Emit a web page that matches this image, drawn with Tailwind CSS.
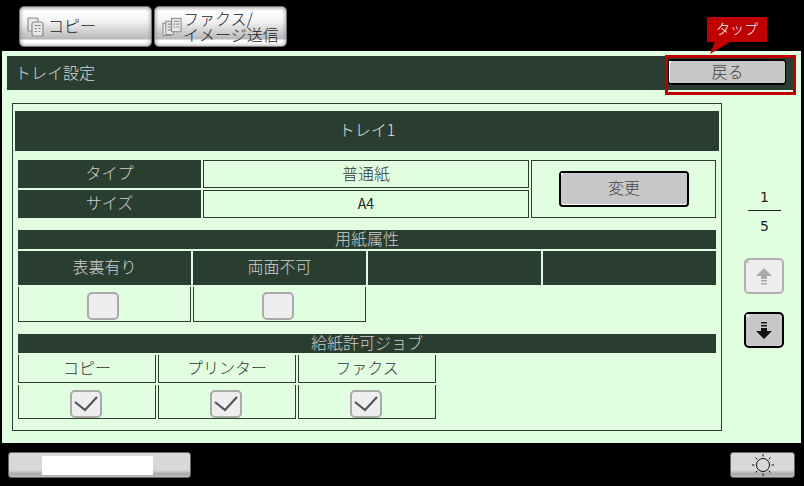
<!DOCTYPE html>
<html lang="ja">
<head>
<meta charset="utf-8">
<script src="https://cdn.jsdelivr.net/npm/@tailwindcss/browser@4"></script>
</head>
<body class="m-0 bg-black">
<div class="relative w-[804px] h-[486px] bg-black overflow-hidden font-['Noto_Sans_CJK_JP','Noto_Sans',sans-serif] font-light text-[16px] leading-none text-[#333]">
  <!-- top tabs -->
  <div class="h-[51px] pt-[6px] pl-[19px] flex gap-[2px]">
    <div class="w-[133px] h-[41px] rounded-[5px] border border-[#777] shadow-[inset_0_0_4px_#8a8a8a] bg-[linear-gradient(#e4e4e4_0px,#ffffff_4px,#f4f4f4_14px,#b8b8b8_32px,#ffffff_33px,#ffffff_40px)] flex items-center pl-[7px] gap-[3px]">
      <svg class="w-[18px] h-[20px]" viewBox="0 0 18 20" fill="#e8e8e8" stroke="#8c8c8c" stroke-width="1.2"><rect x="1" y="1" width="10" height="13" rx="1"/><rect x="5" y="5" width="11" height="14" rx="2"/><path d="M7.5 8.5h6M7.5 11.5h2.5M11.5 11.5h2M7.5 14.5h2.5M11.5 14.5h2"/></svg>
      <span class="text-[#222] pb-[3px]">コピー</span>
    </div>
    <div class="w-[133px] h-[41px] rounded-[5px] border border-[#777] shadow-[inset_0_0_4px_#8a8a8a] bg-[linear-gradient(#e4e4e4_0px,#ffffff_4px,#f4f4f4_14px,#b8b8b8_32px,#ffffff_33px,#ffffff_40px)] flex items-center pl-[7px]">
      <svg class="w-[20px] h-[22px] shrink-0" viewBox="0 0 21 22" fill="#e8e8e8" stroke="#8c8c8c" stroke-width="1.1"><rect x="1" y="7" width="8" height="13"/><rect x="4" y="5" width="8" height="14"/><rect x="10" y="2" width="10" height="14"/><path d="M6 8h4M6 11h4M6 14h4M12 5h6M12 8h2M15 8h3M12 11h2M15 11h3"/></svg>
      <span class="text-[#222] leading-[16px] ml-[1px] mt-[-1px] mb-[1px] whitespace-nowrap">ファクス/<br>イメージ送信</span>
    </div>
  </div>

  <!-- main panel -->
  <div class="ml-[2px] w-[799px] h-[392px] bg-[#e1ffe0] pt-[5px] pl-[5px]">
    <div class="w-[789px] h-[34px] bg-[#293e30] text-[#d8d8d8] flex items-center justify-between pl-[8px] pr-[10px]">
      <span class="pb-[3px]">トレイ設定</span>
      <div class="relative w-[119px] h-[26px] mt-[-2px] rounded-[4px] border-2 border-black bg-white">
        <div class="w-full h-full rounded-[2px] bg-[#c8c8c8] ml-[1px] pb-[2px] flex items-center justify-center text-[#444]">戻る</div>
        <span class="absolute left-0 top-0 w-[2px] h-[2px] bg-white"></span>
      </div>
    </div>

    <div class="flex ml-[5px] mt-[13px]">
      <div class="w-[710px] h-[328px] border border-[#293e30] pt-[7px] pl-[2px]">
        <div class="w-[704px] h-[40px] pb-[5px] bg-[#293e30] text-[#e0e0e0] flex items-center justify-center">トレイ1</div>
        <div class="ml-[3px] w-[698px]">
          <!-- type / size -->
          <div class="mt-[9px] flex gap-[2px] h-[58px]">
            <div class="w-[183px] flex flex-col gap-[2px]">
              <div class="h-[28px] pb-[4px] bg-[#293e30] text-[#cfcfcf] flex items-center justify-center">タイプ</div>
              <div class="h-[28px] pb-[4px] bg-[#293e30] text-[#cfcfcf] flex items-center justify-center">サイズ</div>
            </div>
            <div class="w-[326px] flex flex-col gap-[2px]">
              <div class="h-[28px] pb-[3px] border border-[#293e30] flex items-center justify-center">普通紙</div>
              <div class="h-[28px] pb-[3px] border border-[#293e30] flex items-center justify-center text-[14px] font-normal text-[#222]">A4</div>
            </div>
            <div class="w-[185px] border border-[#293e30] pl-[27px] pt-[10px]">
              <div class="relative w-[130px] h-[36px] rounded-[4px] border-2 border-black bg-white">
                <div class="w-full h-[31px] rounded-[2px] bg-[#c8c8c8] pb-[3px] flex items-center justify-center text-[#444]">変更</div>
                <span class="absolute left-0 top-0 w-[2px] h-[2px] bg-white"></span>
              </div>
            </div>
          </div>

          <!-- paper attributes -->
          <div class="mt-[12px] h-[19px] pb-[4px] bg-[#293e30] text-[#cfcfcf] flex items-center justify-center">用紙属性</div>
          <div class="mt-[2px] flex gap-[2px]">
            <div class="w-[173px] h-[34px] pb-[4px] bg-[#293e30] text-[#cfcfcf] flex items-center justify-center">表裏有り</div>
            <div class="w-[173px] h-[34px] pb-[4px] bg-[#293e30] text-[#cfcfcf] flex items-center justify-center">両面不可</div>
            <div class="w-[173px] h-[34px] bg-[#293e30]"></div>
            <div class="w-[173px] h-[34px] bg-[#293e30]"></div>
          </div>
          <div class="mt-[2px] flex gap-[2px]">
            <div class="w-[173px] h-[35px] border border-t-0 border-[#293e30] pl-[68px] pt-[5px]">
              <div class="w-[32px] h-[28px] rounded-[5px] border-2 border-[#aaa] bg-[#eee]"></div>
            </div>
            <div class="w-[173px] h-[35px] border border-t-0 border-[#293e30] pl-[68px] pt-[5px]">
              <div class="w-[32px] h-[28px] rounded-[5px] border-2 border-[#aaa] bg-[#eee]"></div>
            </div>
          </div>

          <!-- allowed jobs -->
          <div class="mt-[12px] h-[19px] pb-[4px] bg-[#293e30] text-[#cfcfcf] flex items-center justify-center">給紙許可ジョブ</div>
          <div class="mt-[2px] flex gap-[2px]">
            <div class="w-[138px] h-[28px] pb-[3px] border border-t-0 border-[#293e30] flex items-center justify-center">コピー</div>
            <div class="w-[138px] h-[28px] pb-[3px] border border-t-0 border-[#293e30] flex items-center justify-center">プリンター</div>
            <div class="w-[138px] h-[28px] pb-[3px] border border-t-0 border-[#293e30] flex items-center justify-center">ファクス</div>
          </div>
          <div class="mt-[2px] flex gap-[2px]">
            <div class="w-[138px] h-[34px] border border-t-0 border-[#293e30] pl-[51px] pt-[5px]">
              <div class="w-[32px] h-[28px] rounded-[5px] border-2 border-[#aaa] bg-[#eee] flex items-center justify-center">
                <svg class="w-[24px] h-[16px]" viewBox="0 0 24 16" fill="none" stroke="#555" stroke-width="2.2"><path d="M1 6l10 8L23 1"/></svg>
              </div>
            </div>
            <div class="w-[138px] h-[34px] border border-t-0 border-[#293e30] pl-[51px] pt-[5px]">
              <div class="w-[32px] h-[28px] rounded-[5px] border-2 border-[#aaa] bg-[#eee] flex items-center justify-center">
                <svg class="w-[24px] h-[16px]" viewBox="0 0 24 16" fill="none" stroke="#555" stroke-width="2.2"><path d="M1 6l10 8L23 1"/></svg>
              </div>
            </div>
            <div class="w-[138px] h-[34px] border border-t-0 border-[#293e30] pl-[51px] pt-[5px]">
              <div class="w-[32px] h-[28px] rounded-[5px] border-2 border-[#aaa] bg-[#eee] flex items-center justify-center">
                <svg class="w-[24px] h-[16px]" viewBox="0 0 24 16" fill="none" stroke="#555" stroke-width="2.2"><path d="M1 6l10 8L23 1"/></svg>
              </div>
            </div>
          </div>
        </div>
      </div>

      <!-- pager -->
      <div class="w-[77px] flex flex-col items-start">
        <div class="ml-[26px] mt-[86px] w-[33px] h-[22px] border-b border-[#222] text-center font-['DejaVu_Sans'] text-[14px] font-normal text-[#222] leading-[16px]">1</div>
        <div class="ml-[26px] mt-[7px] w-[33px] text-center font-['DejaVu_Sans'] text-[14px] font-normal text-[#222] leading-[16px]">5</div>
        <div class="relative ml-[22px] mt-[24px] w-[40px] h-[36px] rounded-[5px] border-2 border-[#b0b0b0] bg-[#eee] flex items-center justify-center">
          <svg class="w-[16px] h-[17px]" viewBox="0 0 16 17" fill="#aaa"><path d="M8 0L16 8H11V11H5V8H0Z"/><path d="M5 12h6v1.5H5zM5 15h6v1.5H5z"/></svg>
          <span class="absolute left-0 top-0 w-[3px] h-[3px] rounded-full bg-[#bbb]"></span>
        </div>
        <div class="relative ml-[22px] mt-[18px] w-[40px] h-[36px] rounded-[5px] border-2 border-black bg-[#c8c8c8] flex items-center justify-center">
          <svg class="w-[16px] h-[17px]" viewBox="0 0 16 17" fill="#111"><path d="M5 0h6v1.5H5zM5 3h6v1.5H5zM5 6h6v3h5L8 17 0 9h5z"/></svg>
          <span class="absolute left-0 top-0 w-[3px] h-[3px] rounded-full bg-white"></span>
        </div>
      </div>
    </div>
  </div>

  <!-- bottom bar -->
  <div class="flex justify-between pl-[8px] pr-[9px] mt-[9px]">
    <div class="w-[183px] h-[26px] rounded-[3px] border border-[#666] bg-[linear-gradient(#d8d8d8_0px,#d8d8d8_17px,#a8a8a8_21px,#c4c4c4_25px)] pl-[33px] pt-[3px]">
      <div class="w-[111px] h-[19px] bg-white"></div>
    </div>
    <div class="w-[65px] h-[26px] rounded-[3px] border border-[#666] bg-[linear-gradient(#d8d8d8_0px,#d8d8d8_17px,#a8a8a8_21px,#c4c4c4_25px)] flex items-center justify-center">
      <svg class="w-[22px] h-[22px]" viewBox="0 0 22 22" fill="none" stroke="#111" stroke-width="1"><circle cx="11" cy="11" r="6.5"/><path d="M11 0v2.5M11 19.5V22M0 11h2.5M19.5 11H22M3.5 3.5l1.8 1.8M16.7 16.7l1.8 1.8M3.5 18.5l1.8-1.8M16.7 5.3l1.8-1.8"/></svg>
    </div>
  </div>

  <!-- tap callout overlay -->
  <div class="absolute left-[707px] top-[17px] w-[60px] h-[25px] pb-[3px] bg-[#c00000] text-white text-[14px] flex items-center justify-center">タップ</div>
  <svg class="absolute left-[708px] top-[41px] w-[24px] h-[15px]" viewBox="0 0 24 15" fill="#c00000"><path d="M7 0L2 13L22 1V0Z"/></svg>
  <div class="absolute left-[665px] top-[55px] w-[131px] h-[40px] border-[3px] border-[#c00000]"></div>
</div>
</body>
</html>
